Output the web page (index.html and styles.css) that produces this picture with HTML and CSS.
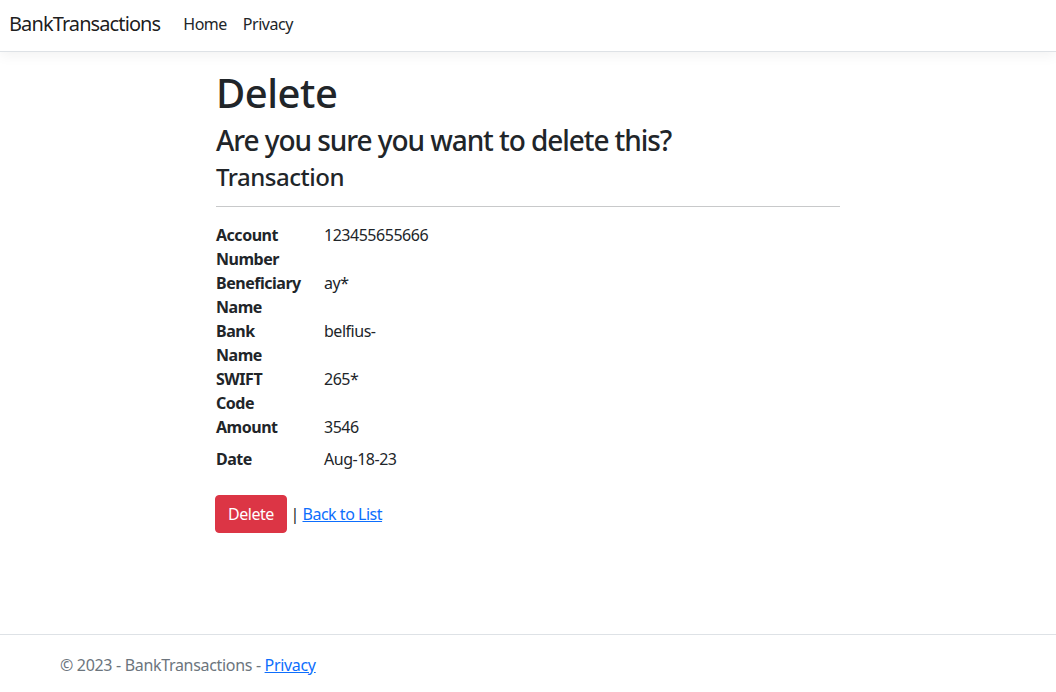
FILE: index.html
```html
<!DOCTYPE html>
<html lang="en">
<head>
<meta charset="utf-8">
<title>Delete - BankTransactions</title>
<link rel="stylesheet" href="styles.css">
</head>
<body>
<div class="page">
  <header class="navbar">
    <a class="brand" href="#">BankTransactions</a>
    <nav class="nav">
      <a class="nav-link" href="#">Home</a>
      <a class="nav-link" href="#">Privacy</a>
    </nav>
  </header>
  <main class="main">
    <h1 class="h1">Delete</h1>
    <h3 class="h3">Are you sure you want to delete this?</h3>
    <div>
      <h4 class="h4">Transaction</h4>
      <hr class="rule">
      <dl class="details">
        <dt class="label">Account Number</dt>
        <dd class="value">123455655666</dd>
        <dt class="label">Beneficiary Name</dt>
        <dd class="value">ay*</dd>
        <dt class="label">Bank Name</dt>
        <dd class="value">belfius-</dd>
        <dt class="label">SWIFT Code</dt>
        <dd class="value">265*</dd>
        <dt class="label">Amount</dt>
        <dd class="value">3546</dd>
        <dt class="label">Date</dt>
        <dd class="value">Aug-18-23</dd>
      </dl>
      <form class="actions">
        <button type="button" class="btn-danger">Delete</button> | <a class="link" href="#">Back to List</a>
      </form>
    </div>
  </main>
  <footer class="footer">
    <div class="footer-inner">© 2023 - BankTransactions - <a class="link" href="#">Privacy</a></div>
  </footer>
</div>
</body>
</html>
```
FILE: styles.css
```css
html, body {
  margin: 0;
  padding: 0;
}
body {
  font-family: "Noto Sans", "Open Sans", "Liberation Sans", sans-serif;
  font-size: 16px;
  line-height: 1.5;
  letter-spacing: -0.03em;
  color: #212529;
  background: #fff;
  overflow: hidden;
}
.page {
  display: flex;
  flex-direction: column;
  height: 100vh;
}
.navbar {
  display: flex;
  align-items: center;
  height: 48px;
  padding: 0 9px 3px;
  border-bottom: 1px solid #dee2e6;
  box-shadow: 0 4px 12px rgba(0, 0, 0, 0.05);
  background: #fff;
}
.brand {
  font-size: 20px;
  line-height: 30px;
  color: rgba(0, 0, 0, 0.9);
  text-decoration: none;
  margin-right: 15px;
  letter-spacing: -0.045em;
}
.nav {
  display: flex;
}
.nav-link {
  padding: 8px;
  color: #212529;
  text-decoration: none;
  line-height: 24px;
}
.main {
  width: 624px;
  margin: 0 auto;
  padding-top: 17px;
}
.h1, .h3, .h4 {
  margin: 0;
  font-weight: 500;
  line-height: 1.2;
}
.h1 { font-size: 40px; margin-bottom: 7px; }
.h3 { font-size: 28px; margin-bottom: 5px; letter-spacing: -0.038em; }
.h4 { font-size: 24px; }
.rule {
  margin: 15px 0 16px;
  border: 0;
  border-top: 1px solid #c8c9ca;
  height: 0;
}
.details {
  display: grid;
  grid-template-columns: 108px 1fr;
  margin: 0 0 16px;
}
.label {
  font-weight: 700;
  width: 84px;
}
.value {
  margin: 0 0 8px;
}
.label:nth-of-type(-n+4) + .value {
  margin-bottom: 0;
}
.actions {
  margin: 0;
}
.btn-danger {
  font-family: inherit;
  font-size: 16px;
  line-height: 24px;
  letter-spacing: -0.03em;
  padding: 6px 12px;
  border: 1px solid #dc3545;
  background: #dc3545;
  color: #fff;
  border-radius: 4px;
  cursor: pointer;
  margin-left: -1px;
}
.link {
  color: #0d6efd;
  text-decoration: underline;
}
.footer {
  margin-top: auto;
  border-top: 1px solid #dee2e6;
  color: #6c757d;
  padding: 18px 0 15px;
  line-height: 24px;
  letter-spacing: -0.02em;
}
.footer-inner {
  width: 936px;
  margin: 0 auto;
}
```
